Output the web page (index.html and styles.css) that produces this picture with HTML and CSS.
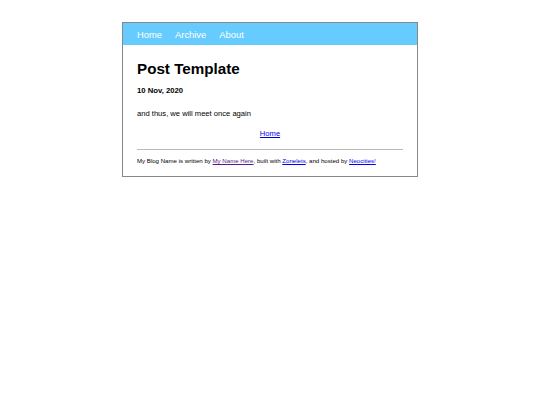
FILE: index.html
```html
<!DOCTYPE html>
<html>
<head>
<meta charset="utf-8">
<link rel="stylesheet" href="styles.css">
</head>
<body>
<div class="page">
  <nav class="nav">
    <a href="#">Home</a>
    <a href="#">Archive</a>
    <a href="#">About</a>
  </nav>
  <main class="content">
    <h1 class="title">Post Template</h1>
    <p class="date">10 Nov, 2020</p>
    <p class="text">and thus, we will meet once again</p>
    <p class="back"><a href="#">Home</a></p>
    <hr class="rule">
    <p class="footer">My Blog Name is written by <a class="visited" href="#">My Name Here</a>, built with <a href="#">Zonelets</a>, and hosted by <a href="#">Neocities!</a></p>
  </main>
</div>
</body>
</html>
```
FILE: styles.css
```css
html, body {
  margin: 0;
  padding: 0;
  background: #fff;
}
body {
  font-family: "Liberation Sans", Arial, sans-serif;
  padding-top: 22px;
}
.page {
  width: 294px;
  margin: 0 auto;
  border: 1px solid #888;
}
.nav {
  background: #66ccff;
  height: 22px;
  display: flex;
  align-items: center;
  gap: 13px;
  padding: 0 14px;
}
.nav a {
  color: #fff;
  text-decoration: none;
  font-size: 9.4px;
}
.content {
  padding: 15px 14px 11px;
}
.title {
  margin: 0;
  font-size: 15.2px;
  line-height: 18px;
  font-weight: bold;
  color: #000;
}
.date {
  margin: 8px 0 0;
  font-size: 7.7px;
  font-weight: bold;
  line-height: 9px;
}
.text {
  margin: 14px 0 0;
  font-size: 7.6px;
  line-height: 9px;
}
.back {
  margin: 11px 0 0;
  text-align: center;
  font-size: 7.6px;
  line-height: 9px;
}
.back a { color: #0000ee; }
.rule {
  margin: 11px 0 0;
  border: 0;
  border-top: 1px solid #bbb;
  height: 0;
}
.footer {
  margin: 7px 0 0;
  font-size: 6.1px;
  line-height: 8px;
}
.footer a { color: #0000ee; }
.footer a.visited { color: #551a8b; }
```
